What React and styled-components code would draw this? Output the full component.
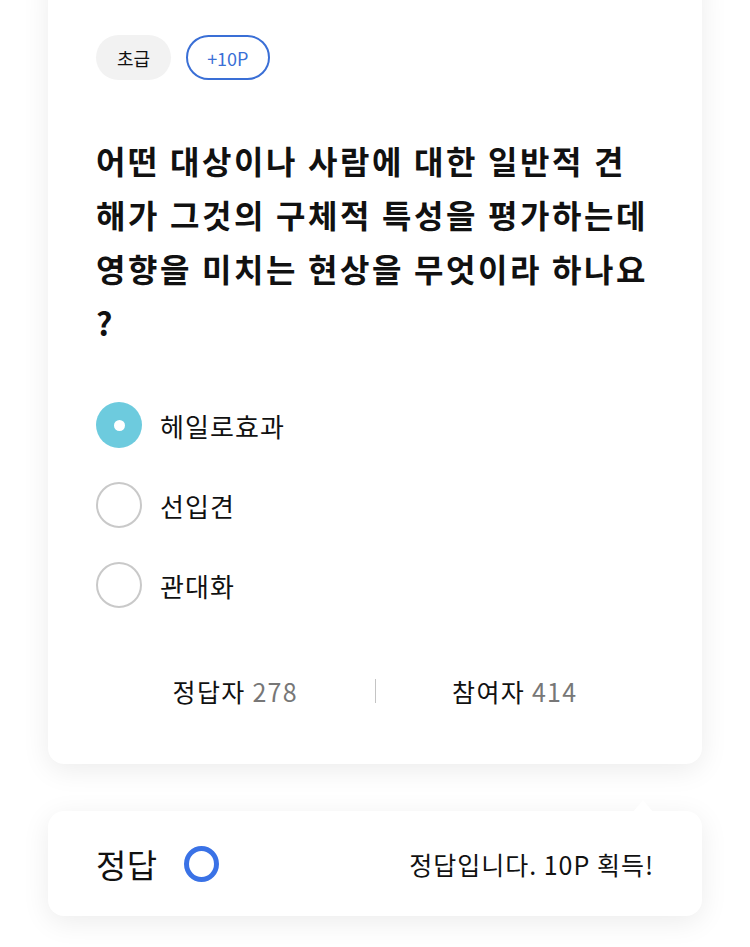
import React from "react";
import styled, { createGlobalStyle } from "styled-components";

const Global = createGlobalStyle`
  html, body { margin: 0; padding: 0; background: #ffffff; }
  body { font-family: "Noto Sans CJK KR", "Noto Sans", sans-serif; color: #111; }
`;

const Page = styled.div`
  padding: 0 48px 40px;
  display: flex;
  flex-direction: column;
  gap: 47px;
`;

const Card = styled.section`
  background: #fff;
  border-radius: 16px;
  box-shadow: 0 6px 28px rgba(0, 0, 0, 0.08);
  margin-top: -30px;
  padding: 65px 48px 55px;
  display: flex;
  flex-direction: column;
`;

const Tags = styled.div`
  display: flex;
  gap: 15px;
`;

const Tag = styled.span`
  height: 45px;
  box-sizing: border-box;
  padding: 0 ${(p) => (p.$outline ? "19px" : "21px")};
  border-radius: 23px;
  display: inline-flex;
  align-items: center;
  font-size: 18px;
  letter-spacing: 0;
  background: ${(p) => (p.$outline ? "#fff" : "#f2f2f2")};
  border: ${(p) => (p.$outline ? "2px solid #3a6fd6" : "none")};
  color: ${(p) => (p.$outline ? "#3a6fd6" : "#111")};
`;

const Question = styled.h2`
  margin: 53px 0 0;
  font-size: 32px;
  line-height: 54px;
  font-weight: 700;
  letter-spacing: 2.6px;
  white-space: nowrap;
`;

const Options = styled.ul`
  list-style: none;
  margin: 53px 0 0;
  padding: 0;
  display: flex;
  flex-direction: column;
  gap: 34px;
`;

const Option = styled.li`
  display: flex;
  align-items: center;
  gap: 18px;
  font-size: 26px;
  letter-spacing: 1.1px;
`;

const Radio = styled.span`
  width: 46px;
  height: 46px;
  box-sizing: border-box;
  border-radius: 50%;
  flex: none;
  display: flex;
  align-items: center;
  justify-content: center;
  background: ${(p) => (p.$checked ? "#6dcbde" : "#fff")};
  border: ${(p) => (p.$checked ? "none" : "2px solid #c9c9c9")};
  &::after {
    content: "";
    display: ${(p) => (p.$checked ? "block" : "none")};
    width: 11px;
    height: 11px;
    border-radius: 50%;
    background: #fff;
  }
`;

const Stats = styled.div`
  margin-top: 65px;
  display: grid;
  grid-template-columns: 1fr auto 1fr;
  align-items: center;
  font-size: 25px;
  letter-spacing: 1.3px;
`;

const Stat = styled.div`
  text-align: center;
  color: #111;
`;

const Num = styled.span`
  color: #777;
`;

const Divider = styled.span`
  width: 1px;
  height: 24px;
  background: #c4c4c4;
`;

const Result = styled.section`
  position: relative;
  background: #fff;
  border-radius: 16px;
  box-shadow: 0 6px 28px rgba(0, 0, 0, 0.08);
  height: 105px;
  box-sizing: border-box;
  padding: 0 48px;
  display: flex;
  align-items: center;
  justify-content: space-between;
  &::before {
    content: "";
    position: absolute;
    top: -11px;
    right: 49px;
    border-left: 10px solid transparent;
    border-right: 10px solid transparent;
    border-bottom: 12px solid #fff;
  }
`;

const ResultLeft = styled.div`
  display: flex;
  align-items: center;
  gap: 26px;
  font-size: 33px;
  letter-spacing: 0.5px;
`;

const Ring = styled.span`
  width: 35px;
  height: 36px;
  box-sizing: border-box;
  border-radius: 50%;
  border: 5px solid #3a72e6;
`;

const ResultText = styled.span`
  font-size: 25px;
  letter-spacing: 1px;
`;

export default function App() {
  return (
    <>
      <Global />
      <Page>
        <Card>
          <Tags>
            <Tag>초급</Tag>
            <Tag $outline>+10P</Tag>
          </Tags>
          <Question>
            어떤 대상이나 사람에 대한 일반적 견<br />
            해가 그것의 구체적 특성을 평가하는데<br />
            영향을 미치는 현상을 무엇이라 하나요<br />?
          </Question>
          <Options>
            <Option>
              <Radio $checked />
              헤일로효과
            </Option>
            <Option>
              <Radio />
              선입견
            </Option>
            <Option>
              <Radio />
              관대화
            </Option>
          </Options>
          <Stats>
            <Stat>
              정답자 <Num>278</Num>
            </Stat>
            <Divider />
            <Stat>
              참여자 <Num>414</Num>
            </Stat>
          </Stats>
        </Card>
        <Result>
          <ResultLeft>
            정답
            <Ring />
          </ResultLeft>
          <ResultText>정답입니다. 10P 획득!</ResultText>
        </Result>
      </Page>
    </>
  );
}
